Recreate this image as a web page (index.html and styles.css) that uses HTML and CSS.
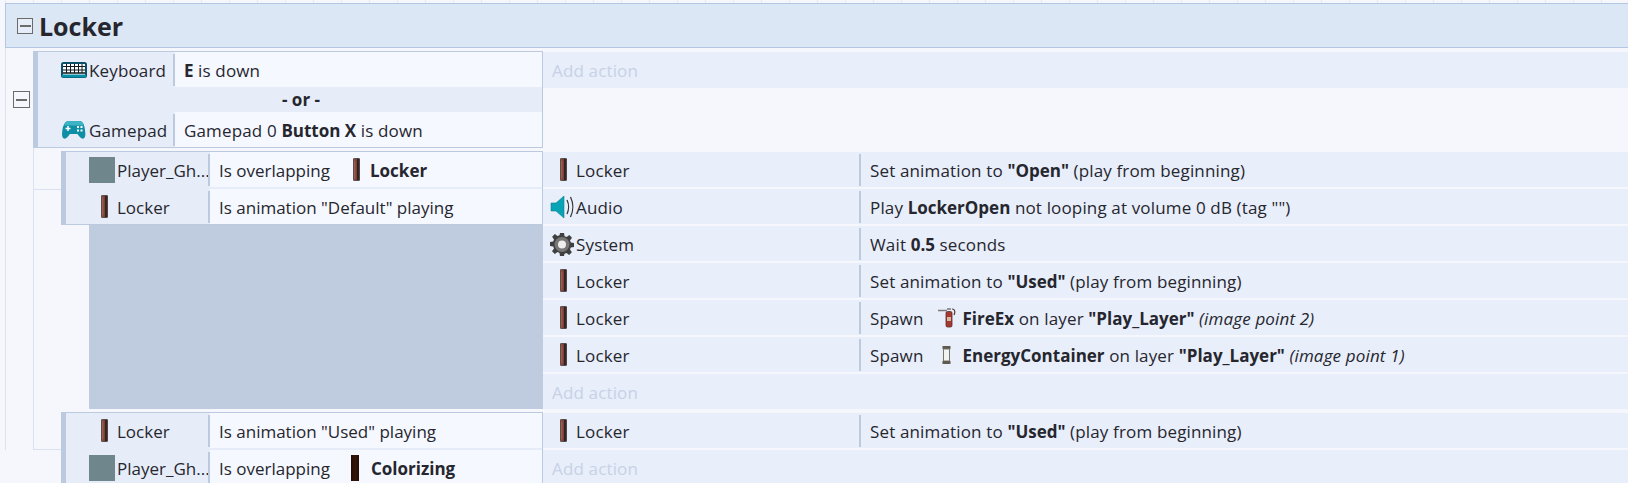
FILE: index.html
```html
<!DOCTYPE html>
<html lang="en">
<head>
<meta charset="utf-8">
<title>Locker</title>
<link rel="stylesheet" href="styles.css">
</head>
<body>
<svg class="defs" width="0" height="0" aria-hidden="true">
  <defs>
    <linearGradient id="lk" x1="0" x2="1" y1="0" y2="0">
      <stop offset="0" stop-color="#9a5446"/><stop offset=".5" stop-color="#7d4036"/><stop offset=".6" stop-color="#2b2020"/><stop offset="1" stop-color="#3f2d2d"/>
    </linearGradient>
    <symbol id="locker" viewBox="0 0 7 23">
      <rect x="0.4" y="0.4" width="6.2" height="22.2" rx="0.8" fill="url(#lk)" stroke="#383030" stroke-width=".8"/>
      <path d="M1.800 3v17" stroke="#b87a6c" stroke-width=".8" opacity=".6"/>
    </symbol>
    <symbol id="keyboard" viewBox="0 0 26 16">
      <rect x="1" y="1" width="24" height="14" rx="1.500" fill="#fff" stroke="#0b4f66" stroke-width="2"/>
      <path d="M2 4.500h22M2 8h22" stroke="#10181c" stroke-width="1"/>
      <path d="M5.500 2v9M9.500 2v9M13.500 2v9M17.500 2v9M21 2v9" stroke="#10181c" stroke-width="1"/>
      <path d="M2 11h22" stroke="#10181c" stroke-width="1.500"/>
      <path d="M1 14h24" stroke="#0a8fa8" stroke-width="3"/>
    </symbol>
    <symbol id="gamepad" viewBox="0 0 24 20">
      <path d="M6.500 1h11c3 0 4.500 3 5.200 7 .7 4.500 1.300 8.500-.7 10.300-2 1.400-4.500-1-6.500-4.300h-7.600c-2 3.300-4.500 5.700-6.500 4.300-2-1.800-1.400-5.800-.7-10.300C2 4 3.500 1 6.500 1z" fill="#0f8fa5"/>
      <path d="M6.500 1h11c2 0 3.500 1.500 4.300 4.500H2.200C3 2.500 4.500 1 6.500 1z" fill="#3cb4c4"/>
      <path d="M3.500 8.500h5M6 6v5" stroke="#fff" stroke-width="1.500"/>
      <path d="M15 6h2v2h-2zM18.500 6h2v2h-2zM15 9.500h2v2h-2zM18.500 9.500h2v2h-2z" fill="#fff"/>
    </symbol>
    <symbol id="audio" viewBox="0 0 24 24">
      <path d="M1 8h5l8-7v22l-8-7H1z" fill="#08a3b5" stroke="#067f90" stroke-width=".6"/>
      <path d="M17 5c2 4 2 10 0 14M20.500 2c3 6 3 14 0 20" fill="none" stroke="#333" stroke-width="1.300"/>
    </symbol>
    <symbol id="gear" viewBox="0 0 24 24">
      <path d="M10 1h4l.6 3.200 2 .8L19.300 3l2.700 2.800-2 2.600.9 2L24 11v4l-3.200.5-.8 2 1.900 2.700-2.800 2.700-2.600-1.900-2 .8L14 24h-4l-.5-3.100-2-.8L4.800 22 2 19.200l2-2.700-.8-2L0 14v-4l3.200-.5.8-2L2.100 4.800 4.900 2l2.600 2 2-.8z" fill="#3f3f3f"/>
      <circle cx="12" cy="12.500" r="7.500" fill="#777"/>
      <circle cx="12" cy="12.500" r="4" fill="#eee"/>
    </symbol>
    <symbol id="fireex" viewBox="0 0 18 20">
      <path d="M0 2.500h9M9 1h4" stroke="#7a7a7a" stroke-width="1.500"/>
      <path d="M14 1c3 0 3.500 3 2 6" fill="none" stroke="#5a3030" stroke-width="1.200"/>
      <rect x="8" y="3.500" width="6" height="15.500" rx="1.500" fill="#a5382f" stroke="#5c2b28" stroke-width=".8"/>
      <rect x="9" y="9" width="4" height="4" fill="#d9b7a8"/>
    </symbol>
    <symbol id="energy" viewBox="0 0 9 18">
      <rect x="0.500" y="0" width="8" height="3" fill="#5f5a50"/>
      <rect x="1.500" y="3" width="6" height="12" fill="#f1f3f1" stroke="#77756b" stroke-width="1"/>
      <rect x="0.500" y="15" width="8" height="3" fill="#5f5a50"/>
    </symbol>
  </defs>
</svg>

<div class="page">
  <header class="group-header">
    <span class="toggle toggle-group"></span>
    <h1 class="group-title">Locker</h1>
  </header>

  <div class="tree">
    <section class="event-top">
      <div class="gutter"><span class="toggle"></span></div>
      <div class="top-grid">
        <div class="cond-box">
          <div class="cond-row">
            <div class="obj obj-top"><svg class="ico ico-kb"><use href="#keyboard"/></svg><span>Keyboard</span></div>
            <div class="param"><b>E</b>&nbsp;is down</div>
          </div>
          <div class="or-row">- or -</div>
          <div class="cond-row">
            <div class="obj obj-top"><svg class="ico ico-pad"><use href="#gamepad"/></svg><span>Gamepad</span></div>
            <div class="param">Gamepad 0&nbsp;<b>Button X</b>&nbsp;is down</div>
          </div>
        </div>
        <div class="add-top">Add action</div>
      </div>
    </section>

    <div class="children">
      <section class="event">
        <div class="cond-col">
          <div class="cond-box sub">
            <div class="cond-row">
              <div class="obj"><span class="player"></span><span>Player_Gh...</span></div>
              <div class="param">Is overlapping<svg class="ico ico-lock inl"><use href="#locker"/></svg><b>Locker</b></div>
            </div>
            <div class="cond-row second">
              <div class="obj"><span class="icon-slot"><svg class="ico ico-lock"><use href="#locker"/></svg></span><span>Locker</span></div>
              <div class="param">Is animation "Default" playing</div>
            </div>
          </div>
          <div class="filler"></div>
        </div>
        <div class="actions">
          <div class="action"><div class="a-obj"><span class="a-slot"><svg class="ico ico-lock"><use href="#locker"/></svg></span>Locker</div><div class="a-param">Set animation to&nbsp;<b>"Open"</b>&nbsp;(play from beginning)</div></div>
          <div class="action"><div class="a-obj"><span class="a-slot"><svg class="ico ico-aud"><use href="#audio"/></svg></span>Audio</div><div class="a-param">Play&nbsp;<b>LockerOpen</b>&nbsp;not looping at volume 0 dB (tag "")</div></div>
          <div class="action"><div class="a-obj"><span class="a-slot"><svg class="ico ico-gear"><use href="#gear"/></svg></span>System</div><div class="a-param">Wait&nbsp;<b>0.5</b>&nbsp;seconds</div></div>
          <div class="action"><div class="a-obj"><span class="a-slot"><svg class="ico ico-lock"><use href="#locker"/></svg></span>Locker</div><div class="a-param">Set animation to&nbsp;<b>"Used"</b>&nbsp;(play from beginning)</div></div>
          <div class="action"><div class="a-obj"><span class="a-slot"><svg class="ico ico-lock"><use href="#locker"/></svg></span>Locker</div><div class="a-param">Spawn<svg class="ico ico-fire inl"><use href="#fireex"/></svg><b>FireEx</b>&nbsp;on layer&nbsp;<b>"Play_Layer"</b>&nbsp;<i>(image point 2)</i></div></div>
          <div class="action"><div class="a-obj"><span class="a-slot"><svg class="ico ico-lock"><use href="#locker"/></svg></span>Locker</div><div class="a-param">Spawn<svg class="ico ico-energy inl"><use href="#energy"/></svg><b>EnergyContainer</b>&nbsp;on layer&nbsp;<b>"Play_Layer"</b>&nbsp;<i>(image point 1)</i></div></div>
          <div class="action add">Add action</div>
        </div>
      </section>

      <section class="event">
        <div class="cond-col">
          <div class="cond-box sub">
            <div class="cond-row">
              <div class="obj"><span class="icon-slot"><svg class="ico ico-lock"><use href="#locker"/></svg></span><span>Locker</span></div>
              <div class="param">Is animation "Used" playing</div>
            </div>
            <div class="cond-row second">
              <div class="obj"><span class="player"></span><span>Player_Gh...</span></div>
              <div class="param">Is overlapping<span class="colorizing"></span><b>Colorizing</b></div>
            </div>
          </div>
        </div>
        <div class="actions">
          <div class="action"><div class="a-obj"><span class="a-slot"><svg class="ico ico-lock"><use href="#locker"/></svg></span>Locker</div><div class="a-param">Set animation to&nbsp;<b>"Used"</b>&nbsp;(play from beginning)</div></div>
          <div class="action add">Add action</div>
        </div>
      </section>
    </div>
  </div>
</div>
</body>
</html>
```

FILE: styles.css
```css
* { box-sizing: border-box; }
html, body { margin: 0; height: 483px; overflow: hidden; }
body {
  background: #f5f7fc;
  color: #26262e;
  font-family: "Open Sans", "Noto Sans", sans-serif;
  font-size: 17px;
  line-height: 22px;
  letter-spacing: .15px;
}
.defs { position: absolute; }
.page {
  padding-top: 3px;
  background: repeating-linear-gradient(90deg, #e4e9f4 0 1px, transparent 1px 28px) 5px 0 / 100% 3px no-repeat;
}
b { font-weight: 700; letter-spacing: 0; }

.group-header {
  margin-left: 5px;
  height: 45px;
  display: flex;
  align-items: center;
  gap: 6px;
  padding-left: 11px;
  background: #dbe7f5;
  border: 1px solid #b4c7e2;
  border-right: 0;
}
.group-title { margin: 0; font-size: 25px; line-height: 30px; font-weight: 700; letter-spacing: 0; color: #26262e; }
.toggle {
  display: block;
  width: 17px;
  height: 17px;
  border: 1px solid #6b6b6b;
  background: linear-gradient(#6b6b6b, #6b6b6b) center / 11px 2px no-repeat;
}
.toggle-group { width: 16px; height: 16px; background-color: #e6edf8; }

.tree { margin-left: 5px; border-left: 1px solid #dbe1f1; }

.event-top { display: flex; padding-top: 3px; }
.gutter { width: 27px; display: flex; align-items: center; padding-left: 7px; }
.top-grid { flex: 1; display: grid; grid-template-columns: 510px 1fr; align-items: start; }

.cond-box {
  background: #e6edf9;
  border: 1px solid #bccadf;
  border-left-width: 5px;
}
.cond-box.sub { letter-spacing: 0; }
.cond-row { display: flex; height: 35px; }
.cond-row.second { margin-top: 2px; }
.or-row { height: 25px; padding-left: 22px; text-align: center; font-weight: 700; font-size: 17px; line-height: 26px; letter-spacing: 0; }

.obj {
  width: 144px;
  display: flex;
  align-items: center;
  padding: 2px 0 0 23px;
  position: relative;
  white-space: nowrap;
  flex: none;
}
.obj-top { width: 137px; }
.obj::after {
  content: "";
  position: absolute;
  right: 0;
  top: 2px;
  bottom: 1px;
  width: 2px;
  background: #bccadf;
}
.param {
  flex: 1;
  display: flex;
  align-items: center;
  padding: 2px 0 0 9px;
  background: #f5f8ff;
  white-space: nowrap;
}

.ico { display: block; flex: none; margin-bottom: 2px; }
.ico-kb { width: 26px; height: 16px; margin-right: 2px; }
.ico-pad { width: 24px; height: 20px; margin-left: 1px; margin-right: 3px; }
.ico-lock { width: 7px; height: 23px; }
.ico-aud, .ico-gear { width: 24px; height: 24px; }
.ico-fire { width: 18px; height: 20px; }
.ico-energy { width: 9px; height: 18px; }
.ico-lock.inl { margin-left: 23px; margin-right: 10px; }
.ico-fire.inl { margin-left: 14px; margin-right: 7px; }
.ico-energy.inl { margin-left: 18px; margin-right: 12px; }

.player { width: 26px; height: 26px; background: #6f878c; margin: 0 2px 2px 0; flex: none; }
.icon-slot { width: 28px; display: flex; padding-left: 12px; flex: none; }
.colorizing { width: 8px; height: 26px; background: linear-gradient(90deg, #1c0f0a, #3a1605 50%, #1c0f0a); margin: 0 12px 2px 21px; flex: none; }

.add-top {
  height: 36px;
  margin-top: 1px;
  padding: 2px 0 0 9px;
  display: flex;
  align-items: center;
  background: #e8eefa;
  color: #c7d2e6;
}

.children {
  margin-left: 27px;
  border-left: 1px solid #dbe1f1;
  height: 302px;
  position: relative;
}
.children::before, .children::after {
  content: "";
  position: absolute;
  left: 0;
  width: 27px;
  height: 1px;
  background: #dbe1f1;
}
.children::before { top: 41px; }
.children::after { top: 301px; }

.event { display: grid; grid-template-columns: 482px 1fr; margin-left: 27px; padding-top: 3px; }
.cond-col { display: flex; flex-direction: column; }
.filler { flex: 1; margin-left: 28px; background: #bfcbdf; }

.actions { display: flex; flex-direction: column; gap: 2px; padding-top: 1px; }
.action { height: 35px; display: flex; background: #e8eefa; white-space: nowrap; }
.action.add { align-items: center; padding: 2px 0 0 9px; color: #c7d2e6; }
.a-obj { width: 318px; display: flex; align-items: center; position: relative; flex: none; padding-top: 2px; }
.a-obj::after {
  content: "";
  position: absolute;
  right: 0;
  top: 2px;
  bottom: 1px;
  width: 2px;
  background: #bccadf;
}
.a-slot { width: 33px; padding-left: 17px; flex: none; display: flex; align-items: center; }
.a-slot .ico-aud, .a-slot .ico-gear { margin-left: -10px; }
.a-param { display: flex; align-items: center; padding: 2px 0 0 9px; }
```
